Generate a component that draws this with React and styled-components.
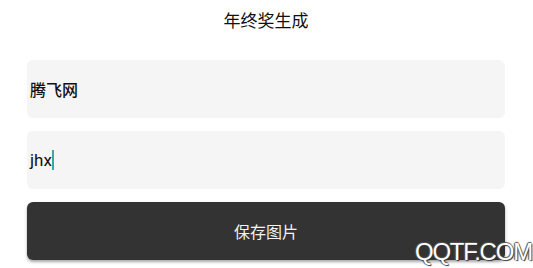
import React from 'react';
import styled, { createGlobalStyle } from 'styled-components';

const Global = createGlobalStyle`
  html, body { margin: 0; padding: 0; background: #fff; }
  body { font-family: Roboto, "Noto Sans CJK SC", sans-serif; }
`;

const Page = styled.div`
  position: relative; width: 533px; height: 268px; overflow: hidden;
  display: flex; flex-direction: column;
  padding: 0 28px 0 27px; box-sizing: border-box;
`;
const Title = styled.div`
  height: 40px; line-height: 40px; text-align: center;
  font-size: 17px; color: #111;
  font-family: "Noto Sans CJK SC", sans-serif;
`;
const Form = styled.div`
  margin-top: 20px;
  display: flex; flex-direction: column; gap: 13px;
`;
const Field = styled.div`
  height: 58px; border-radius: 6px; background: #f5f5f5;
  display: flex; align-items: center; padding-left: 3px;
  font-size: ${p => p.bold ? 16 : 17}px; color: #111;
  font-weight: ${p => p.bold ? 500 : 400};
  font-family: ${p => p.bold ? '"Noto Sans CJK SC"' : 'Roboto, "Noto Sans CJK SC"'}, sans-serif;
`;
const Caret = styled.span`
  display: inline-block; width: 2px; height: 20px;
  background: #3aa8a0;
`;
const SaveButton = styled.button`
  height: 58px; border: none; border-radius: 6px;
  background: #333; color: #f2f2f2;
  font-size: 16px; font-family: "Noto Sans CJK SC", sans-serif;
  box-shadow: 0 2px 3px rgba(0, 0, 0, 0.35);
  padding: 0;
`;
const Watermark = styled.div`
  position: absolute; right: 1px; bottom: 2px;
  font-family: "Liberation Sans", Arial, sans-serif; font-size: 24px;
  color: #fff; letter-spacing: -1.2px;
  text-shadow: 1px 1px 1px #333, -1px 0 1px #555, 0 -1px 1px #555;
`;

export default function App() {
  return (
    <>
      <Global />
      <Page>
        <Title>年终奖生成</Title>
        <Form>
          <Field bold>腾飞网</Field>
          <Field>jhx<Caret /></Field>
          <SaveButton>保存图片</SaveButton>
        </Form>
        <Watermark>QQTF.COM</Watermark>
      </Page>
    </>
  );
}
